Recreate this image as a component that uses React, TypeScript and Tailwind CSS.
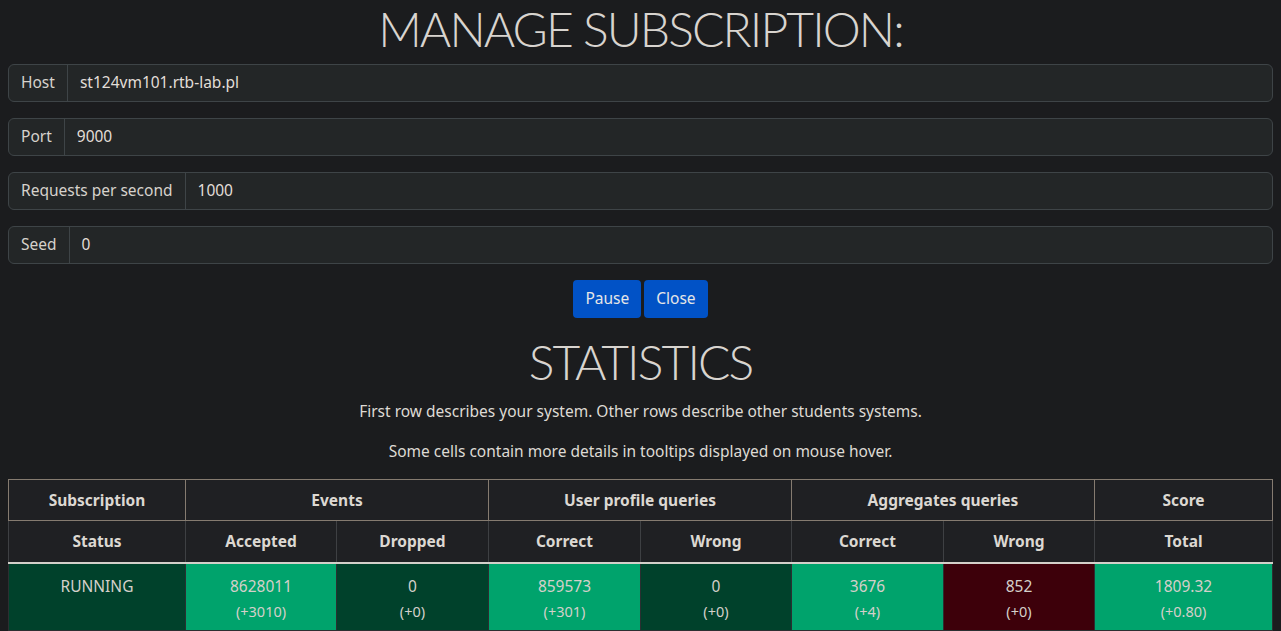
import React from 'react';

const fields = [
  { label: 'Host', value: 'st124vm101.rtb-lab.pl' },
  { label: 'Port', value: '9000' },
  { label: 'Requests per second', value: '1000' },
  { label: 'Seed', value: '0' },
];

const GREEN = 'bg-[#00a36c]';
const DARK_GREEN = 'bg-[#00412b]';
const DARK_RED = 'bg-[#3d000a]';

const firstRow = [
  { value: 'RUNNING', bg: DARK_GREEN },
  { value: '8628011', delta: '(+3010)', bg: GREEN },
  { value: '0', delta: '(+0)', bg: DARK_GREEN },
  { value: '859573', delta: '(+301)', bg: GREEN },
  { value: '0', delta: '(+0)', bg: DARK_GREEN },
  { value: '3676', delta: '(+4)', bg: GREEN },
  { value: '852', delta: '(+0)', bg: DARK_RED },
  { value: '1809.32', delta: '(+0.80)', bg: GREEN },
];

const secondRow = [DARK_GREEN, DARK_GREEN, DARK_RED, DARK_GREEN, DARK_RED, DARK_GREEN, DARK_RED, GREEN];

const App: React.FC = () => {
  return (
    <div
      className="min-h-screen bg-[#1b1c1e] text-[#dedad4] px-2 text-[15.5px]"
      style={{ fontFamily: '"Noto Sans", "Open Sans", sans-serif' }}
    >
      {/* Subscription form */}
      <h1
        className="text-center text-[48px] leading-[56px] font-light tracking-[-1.9px] text-[#d8d4cf] pt-[1px] mb-[7px]"
        style={{ fontFamily: 'Lato, sans-serif' }}
      >
        MANAGE SUBSCRIPTION:
      </h1>

      {fields.map((f) => (
        <div key={f.label} className="flex h-[38px] mb-4 border border-[#3e4447] rounded-md bg-[#232627]">
          <div className="flex items-center px-3 border-r border-[#3e4447] text-[#d6d2cc]">{f.label}</div>
          <div className="flex items-center px-3 text-[#e2ded8]">{f.value}</div>
        </div>
      ))}

      <div className="flex justify-center gap-[3px]">
        <button className="h-[38px] px-3 rounded-[4px] bg-[#0152c6] text-[#e6e6e6]">Pause</button>
        <button className="h-[38px] px-3 rounded-[4px] bg-[#0152c6] text-[#e6e6e6]">Close</button>
      </div>

      {/* Statistics */}
      <h2
        className="mt-[15px] text-center text-[48px] leading-[57px] font-light tracking-[-1.9px] text-[#d8d4cf] mb-[9px]"
        style={{ fontFamily: 'Lato, sans-serif' }}
      >
        STATISTICS
      </h2>
      <p className="text-center leading-6 mb-4">First row describes your system. Other rows describe other students systems.</p>
      <p className="text-center leading-6 mb-4">Some cells contain more details in tooltips displayed on mouse hover.</p>

      <table className="w-full table-fixed border-collapse text-center">
        <colgroup>
          <col className="w-[177px]" />
          <col className="w-[151px]" />
          <col className="w-[152px]" />
          <col className="w-[152px]" />
          <col className="w-[151px]" />
          <col className="w-[152px]" />
          <col className="w-[151px]" />
          <col className="w-[178px]" />
        </colgroup>
        <thead className="bg-[#1f2023] font-bold text-[#dcd8d2]">
          <tr className="h-[41px]">
            <th className="border border-[#857b70] pt-[1px]">Subscription</th>
            <th colSpan={2} className="border border-[#857b70] pt-[1px]">Events</th>
            <th colSpan={2} className="border border-[#857b70] pt-[1px]">User profile queries</th>
            <th colSpan={2} className="border border-[#857b70] pt-[1px]">Aggregates queries</th>
            <th className="border border-[#857b70] pt-[1px]">Score</th>
          </tr>
          <tr className="h-[42px]">
            {['Status', 'Accepted', 'Dropped', 'Correct', 'Wrong', 'Correct', 'Wrong', 'Total'].map((h, i) => (
              <th key={i} className="border-x border-[#3e4043] border-b-2 border-b-[#d4d0ca] pt-[1px]">{h}</th>
            ))}
          </tr>
        </thead>
        <tbody className="text-[#d4d0ca]">
          <tr>
            {firstRow.map((c, i) => (
              <td key={i} className={`${c.bg} border border-[#2c2f31] align-top pt-[10px] pb-[7px] h-[65px]`}>
                <div className="leading-6">{c.value}</div>
                {c.delta && <div className="text-[14.5px] leading-6 mt-[1px]">{c.delta}</div>}
              </td>
            ))}
          </tr>
          <tr>
            {secondRow.map((bg, i) => (
              <td key={i} className={`${bg} border border-[#2c2f31] h-[65px]`}>&nbsp;</td>
            ))}
          </tr>
        </tbody>
      </table>
    </div>
  );
};

export default App;
